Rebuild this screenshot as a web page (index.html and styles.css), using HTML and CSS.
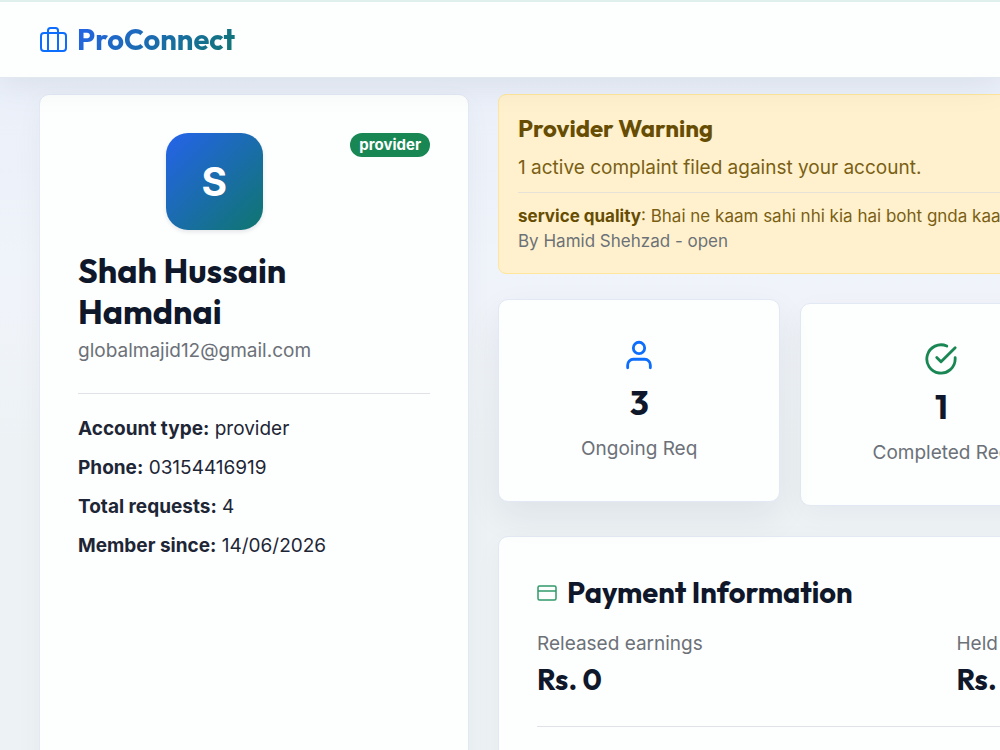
FILE: index.html
```
<!DOCTYPE html>
<html lang="en">
<head>
    <meta charset="UTF-8">
    <meta name="viewport" content="width=device-width, initial-scale=1.0">
    <title>ProConnect</title>
    <link rel="stylesheet" href="styles.css">
</head>
<body>
    <header class="navbar">
        <a class="brand" href="#">
            <svg class="brand-icon" viewBox="0 0 28 28" fill="none" stroke="currentColor" stroke-width="2" stroke-linecap="round" stroke-linejoin="round">
                <rect x="2" y="7" width="25" height="18" rx="3"/>
                <path d="M9 25V4.500a2.500 2.500 0 0 1 2.500-2.500h5a2.500 2.500 0 0 1 2.500 2.500V25"/>
            </svg>
            <span class="brand-name">ProConnect</span>
        </a>
    </header>
    <main class="dashboard">
        <aside class="card profile">
            <div class="profile-top">
                <div class="avatar-wrap">
                    <div class="avatar">S</div>
                </div>
                <span class="badge">provider</span>
            </div>
            <h1>Shah Hussain Hamdnai</h1>
            <p class="email">globalmajid12@gmail.com</p>
            <hr>
            <div class="details">
                <p><strong>Account type:</strong> provider</p>
                <p><strong>Phone:</strong> 03154416919</p>
                <p><strong>Total requests:</strong> 4</p>
                <p><strong>Member since:</strong> 14/06/2026</p>
            </div>
        </aside>
        <div class="content">
            <section class="warning">
                <h2>Provider Warning</h2>
                <p class="warning-text">1 active complaint filed against your account.</p>
                <div class="complaint">
                    <p><strong>service quality</strong>: Bhai ne kaam sahi nhi kia hai boht gnda kaam</p>
                    <p class="muted">By Hamid Shehzad - open</p>
                </div>
            </section>
            <section class="stats">
                <div class="card stat stat-active">
                    <svg class="stat-icon blue" viewBox="0 0 24 24" fill="none" stroke="currentColor" stroke-width="2" stroke-linecap="round" stroke-linejoin="round">
                        <path d="M20 21v-2a4 4 0 0 0-4-4H8a4 4 0 0 0-4 4v2"/>
                        <circle cx="12" cy="7" r="4"/>
                    </svg>
                    <h3>3</h3>
                    <p class="muted">Ongoing Req</p>
                </div>
                <div class="card stat">
                    <svg class="stat-icon green" viewBox="0 0 24 24" fill="none" stroke="currentColor" stroke-width="2" stroke-linecap="round" stroke-linejoin="round">
                        <path d="M22 11.080V12a10 10 0 1 1-5.930-9.140"/>
                        <path d="m9 11 3 3L22 4"/>
                    </svg>
                    <h3>1</h3>
                    <p class="muted">Completed Req</p>
                </div>
            </section>
            <section class="card payment">
                <h2>
                    <svg class="payment-icon" viewBox="0 0 20 16" fill="none" stroke="currentColor" stroke-width="1.500">
                        <rect x="1" y="1" width="18" height="14" rx="1.500"/>
                        <path d="M1 6h18"/>
                    </svg>
                    Payment Information
                </h2>
                <div class="earnings">
                    <div>
                        <p class="muted">Released earnings</p>
                        <h3>Rs. 0</h3>
                    </div>
                    <div>
                        <p class="muted">Held earnings</p>
                        <h3>Rs. 0</h3>
                    </div>
                </div>
                <hr>
            </section>
        </div>
    </main>
</body>
</html>
```
FILE: styles.css
```
* {
    box-sizing: border-box;
    margin: 0;
    padding: 0;
}
body {
    height: 100vh;
    overflow: hidden;
    font-family: Inter, "Liberation Sans", sans-serif;
    font-size: 19px;
    line-height: 29px;
    color: #1e2636;
    background: linear-gradient(180deg, #e8eef9, #f0f4fa 40%, #edf2f5 60%);
}
h1, h2, h3, .brand-name {
    font-family: Outfit, Lato, sans-serif;
    font-weight: 700;
    color: #0f172a;
}
strong {
    font-weight: 700;
}
hr {
    border: none;
    border-top: 1px solid #dfe3e8;
}
.navbar {
    position: relative;
    height: 78px;
    padding: 0 39px;
    display: flex;
    align-items: center;
    background-color: #fdfefe;
    border-top: 2px solid #e0f0ec;
    border-bottom: 1px solid #e2e8f0;
    box-shadow: 0 5px 36px rgba(15, 23, 42, 0.08);
}
.brand {
    display: flex;
    align-items: center;
    gap: 10px;
    text-decoration: none;
}
.brand-icon {
    width: 28px;
    height: 28px;
    color: #0d6efd;
}
.brand-name {
    font-size: 29px;
    line-height: 40px;
    color: transparent;
    background: linear-gradient(135deg, #2563eb, #0f766e);
    background-clip: text;
    -webkit-background-clip: text;
}
.dashboard {
    display: grid;
    grid-template-columns: 43vw minmax(887px, 1fr);
    gap: 29px;
    padding: 16px 39px;
}
.card {
    background-color: #fdfefe;
    border: 1px solid #e2e8f4;
    border-radius: 10px;
    box-shadow: 0 8px 28px rgba(15, 23, 42, 0.04);
}
.muted, .email {
    color: #6c7178;
}
.profile {
    padding: 38px;
}
.profile-top {
    display: flex;
    align-items: flex-start;
}
.avatar-wrap {
    flex: 1;
}
.avatar {
    width: 97px;
    height: 97px;
    margin: 0 auto 20px;
    border-radius: 22px;
    background: linear-gradient(135deg, #2563eb, #0f766e);
    box-shadow: 0 2px 4px rgba(15, 23, 42, 0.1);
    color: white;
    font-size: 39px;
    font-weight: 700;
    line-height: 97px;
    text-align: center;
}
.badge {
    padding: 0 9px;
    border-radius: 12px;
    background-color: #198754;
    color: white;
    font-size: 15px;
    font-weight: 700;
    line-height: 24px;
}
.profile h1 {
    max-width: 280px;
    font-size: 34px;
    line-height: 41px;
}
.email {
    margin: 4px 0 28px;
}
.details {
    display: grid;
    gap: 10px;
    padding-top: 20px;
}
.warning {
    min-height: 180px;
    padding: 18px 19px;
    border: 1px solid #ffe69c;
    border-radius: 8px;
    background-color: #fff1cd;
    color: #7a5f14;
}
.warning h2 {
    font-size: 24px;
    line-height: 30px;
    color: #664d03;
}
.warning-text {
    margin: 10px 0;
}
.complaint {
    padding-top: 11px;
    border-top: 1px solid #e6e2d8;
    font-size: 17px;
    line-height: 25px;
}
.complaint strong {
    color: #664d03;
}
.stats {
    display: grid;
    grid-template-columns: repeat(3, 1fr);
    gap: 20px;
    margin: 29px 0 30px;
}
.stat {
    display: flex;
    flex-direction: column;
    align-items: center;
    padding: 38px 10px;
}
.stat-active {
    transform: translateY(-4px);
    box-shadow: 0 14px 36px rgba(15, 23, 42, 0.07);
}
.stat-icon {
    width: 34px;
    height: 34px;
}
.blue {
    color: #0d6efd;
}
.green {
    color: #198754;
}
.stat h3 {
    margin: 10px 0;
    font-size: 34px;
    line-height: 42px;
}
.payment {
    min-height: 300px;
    padding: 38px;
}
.payment h2 {
    display: flex;
    align-items: center;
    gap: 10px;
    font-size: 29px;
    line-height: 36px;
}
.payment-icon {
    width: 20px;
    height: 16px;
    color: #2f9a68;
}
.earnings {
    display: grid;
    grid-template-columns: 1fr 1fr;
    gap: 30px;
    padding: 18px 0 28px;
}
.earnings h3 {
    margin-top: 4px;
    font-size: 29px;
    line-height: 36px;
}
```
